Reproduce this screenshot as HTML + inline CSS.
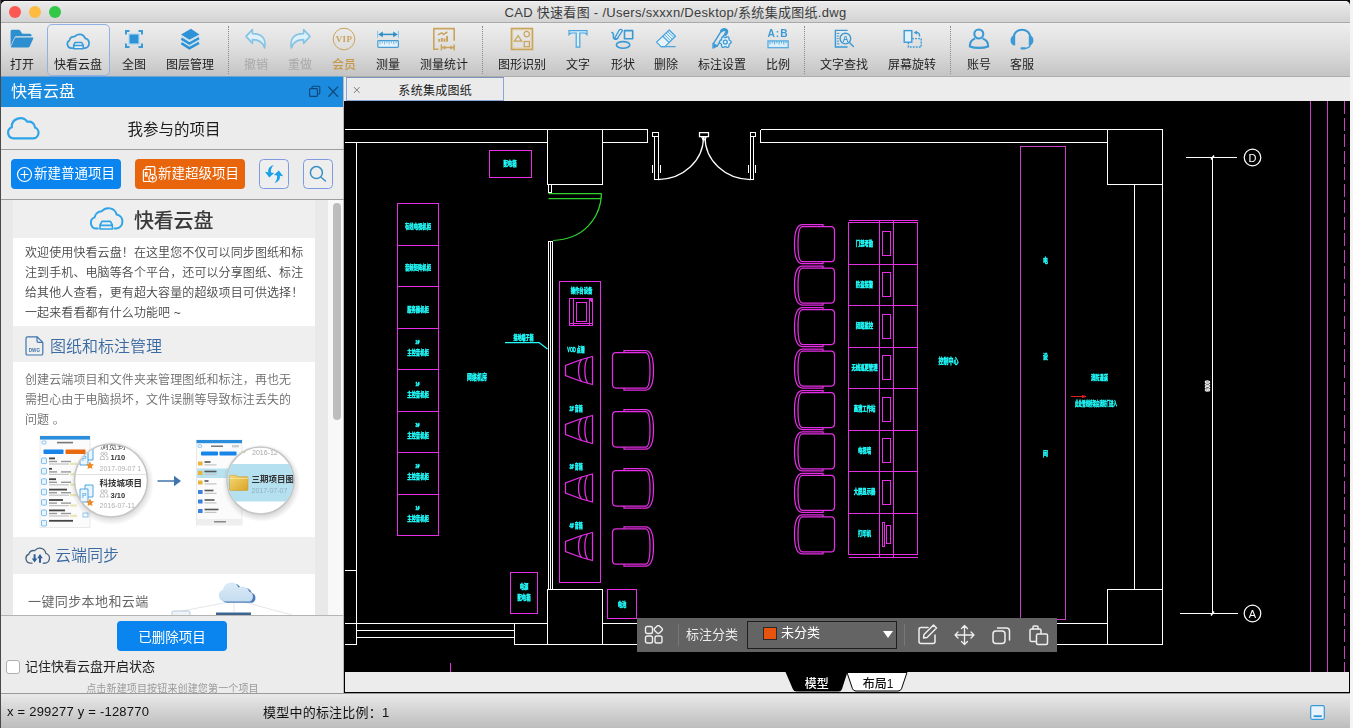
<!DOCTYPE html>
<html lang="zh-CN">
<head>
<meta charset="utf-8">
<title>CAD 快速看图</title>
<style>
*{box-sizing:border-box;margin:0;padding:0}
html,body{width:1353px;height:728px;overflow:hidden}
body{position:relative;background:#ececec;font-family:"Liberation Sans","Noto Sans CJK SC",sans-serif;color:#222;font-size:13px}
.abs{position:absolute}
span,p,svg,#lptitle{will-change:transform}
#edgeL{left:0;top:0;width:1px;height:728px;background:#4a4a4a}
#edgeR{left:1350px;top:0;width:3px;height:728px;background:#f4f4f4}
#topline{left:0;top:0;width:1350px;height:7px;background:#0c0c12}
#titlebar{left:1px;top:1px;width:1349px;height:21px;background:linear-gradient(#ebebeb,#d3d3d3);border-radius:5px 5px 0 0;box-shadow:inset 0 1px 0 #f4f4f4;text-align:center;font-size:13px;line-height:24px;color:#3c3c3c;letter-spacing:.3px}
#titleborder{left:1px;top:22px;width:1349px;height:1px;background:#a9a9a9}
.tl{position:absolute;top:5px;width:12px;height:12px;border-radius:50%}
#toolbar{left:1px;top:23px;width:1349px;height:54px;background:linear-gradient(#eeeeee 0%,#dddddd 50%,#c4c4c4 100%);border-bottom:1px solid #adadad}
.tb{position:absolute;top:0;height:54px;text-align:center;font-size:12px;color:#222;white-space:nowrap}
.tb span{position:absolute;left:-40px;right:-40px;top:34.200px;line-height:16px;text-align:center}
.tb svg{position:absolute;left:50%;top:4px;margin-left:-14px;width:28px;height:28px}
.tb.dis span{color:#a8a8a8}
.tb.vip span{color:#c5994a;font-weight:500}
.sep{position:absolute;top:3px;height:48px;width:0;border-left:1px dotted #8a8a8a}
#cloudbtn{left:45.500px;top:1px;width:63.500px;height:51.500px;border:1px solid #8fb0e8;border-radius:5px;background:rgba(255,255,255,.15)}

#lp{left:1px;top:77px;width:343px;height:616px;background:#ececec;border-right:1px solid #b9b9b9}
#lphead{left:0;top:0;width:342px;height:30px;background:#1b8be0;box-shadow:0 -1px 0 rgba(90,160,225,.75);color:#fff;font-size:16px;line-height:29.500px}
#lphead span{position:absolute;left:10px;top:0}
#lptitle{left:0;top:41.500px;width:346px;text-align:center;font-size:15.500px;line-height:22px;color:#1d1d1d}
.hl{left:0;width:343px;height:1px;background:#9d9d9d}
.btn{height:30px;border-radius:4px;color:#fff;font-size:13.500px;line-height:29px;white-space:nowrap}
.btn svg{position:absolute}
.btn span{position:absolute;top:0}
.ibtn{width:30px;height:30px;border:1px solid #7e9be0;border-radius:4.5px;background:#eeeeee}
.ibtn svg{position:absolute;left:-1px;top:-1px}
#scroll{left:0;top:123px;width:342px;height:415px;overflow:hidden;background:#e9e9e9}
#content{left:12px;top:0;width:302px}
.sec{position:relative;width:302px;overflow:hidden}
.sec.gray{background:#efefef}
.sec.white{background:#fff}
.sec p{position:absolute;left:12px;top:4px;width:290px;font-size:12px;line-height:20px;color:#484848;font-weight:350;white-space:nowrap;letter-spacing:.1px}
.h2{position:absolute;top:8.500px;font-size:16px;line-height:24px;color:#3a6aa2;font-weight:350}
#sbtrack{left:327px;top:0;width:16px;height:415px;background:#f8f8f8}
#sbtrack i{position:absolute;left:5px;top:3px;width:8px;height:217px;border-radius:4px;background:#bdbdbd}
#chk{left:5px;top:583px;width:14px;height:14px;border:1px solid #b0b0b0;border-radius:3px;background:#fff}
#status{left:1px;top:693px;width:1349px;height:35px;background:linear-gradient(#e9e9e9,#bdbdbd);border-top:1px solid #9a9a9a;font-size:13px;color:#111;line-height:16px;white-space:nowrap;letter-spacing:.22px}

#tabbar{left:345px;top:77px;width:1005px;height:24px;background:#ececec}
#tab{left:1px;top:0;width:158px;height:24px;border:1px solid #86a6dc;border-top-color:#7d93b8;background:#ebebeb;font-size:12px;line-height:26px;color:#222;text-align:center;padding-left:20.500px;letter-spacing:.3px}
#canvas{left:344px;top:101px;width:1006px;height:571px;background:#000}
#cad{left:344px;top:101px}
#btabs{left:344px;top:672px;width:1006px;height:21px;background:#ececec;border:1px solid #000;border-top:0}
#ftb{left:637px;top:618px;width:420px;height:34px;background:#626262}
.vd{top:6px;width:1px;height:22px;background:#787878}
#dd{left:110px;top:3px;width:150px;height:28px;border:1px solid #1e1e1e;background:#646464}
</style>
</head>
<body>
<div id="topline" class="abs"></div>
<div id="titlebar" class="abs"><span>CAD 快速看图 - /Users/sxxxn/Desktop/系统集成图纸.dwg</span>
<i class="tl" style="left:8px;background:#fc5753"></i><i class="tl" style="left:28px;background:#fdbc40"></i><i class="tl" style="left:48px;background:#33c748"></i>
</div>
<div id="titleborder" class="abs"></div>
<div id="toolbar" class="abs">
<div id="cloudbtn" class="abs"></div>
<div class="tb " style="left:21px;width:0"><svg viewBox="-16 0 32 28" style="margin-left:-16px;width:32px;height:28px;top:2px"><path fill="#2d8fd0" d="M-11.4,6.2q0-1.5 1.5-1.5h6.6q.9,0 1.4,.8l1.6,2.5q.4,.7 1.3,.7h7q1.5,0 1.5,1.5v1H-5.6q-1.4,0 -2,1.3l-3.8,8.2zM-6.3,12.4h16.9q1.2,0 .7,1.1l-3.6,8q-.5,1.1-1.7,1.1h-16.3q-1.2,0-.7-1.1l3.6-8q.5-1.1 1.1-1.1z"/></svg><span>打开</span></div>
<div class="tb " style="left:77px;width:0"><svg viewBox="-16 0 32 28" style="margin-left:-16px;width:32px;height:28px;top:2px"><g fill="none" stroke="#3a9ad6" stroke-width="1.7" stroke-linecap="round" stroke-linejoin="round"><path d="M-5.6,23.2H-6.8A4.2,4.2 0 0 1 -8.6,15.4A5,5 0 0 1 -3.4,11.6A6.2,6.2 0 0 1 7.2,13.4A5,5 0 0 1 6.8,23.2H6.4"/><path d="M-4.3,23.8V20.2L-2.8,17.4H3.6L5.2,20.2V23.8ZM-4.3,20.5H5.2" stroke-width="1.5" fill="#e4f2fb"/></g></svg><span>快看云盘</span></div>
<div class="tb " style="left:133px;width:0"><svg viewBox="-16 0 32 28" style="margin-left:-16px;width:32px;height:28px;top:2px"><rect x="-5.6" y="8.4" width="11.2" height="11.2" fill="#a9d6f2"/><rect x="-4.4" y="9.6" width="8.8" height="8.8" fill="#2e92d6"/><path fill="none" stroke="#3a9ad6" stroke-width="2" d="M-8,9.5V6h3.5M4.5,6H8V9.500M8,18.5V22H4.5M-4.5,22H-8V18.5"/></svg><span>全图</span></div>
<div class="tb " style="left:189px;width:0"><svg viewBox="-16 0 32 28" style="margin-left:-16px;width:32px;height:28px;top:2px"><path fill="#2e92d6" d="M1,3.8L9.4,9.4L-.6,14.8L-9,9.6Z"/><path fill="none" stroke="#2e92d6" stroke-width="2.6" d="M-8.6,13.6L-.6,18.6L9,13.2M-8.6,18.2L-.6,23.2L9,17.8"/><path fill="none" stroke="#bfe2f7" stroke-width="1" d="M-9,11.2L-.6,16.4L9.4,11M-9,15.9L-.6,21L9.4,15.6"/></svg><span>图层管理</span></div>
<i class="sep" style="left:227px"></i>
<div class="tb dis" style="left:255px;width:0"><svg viewBox="-16 0 32 28" style="margin-left:-16px;width:32px;height:28px;top:2px"><path d="M-10,11.4L-3.6,4.6V8.6C5,8.4 10.6,13 8.6,23C7,17.2 3,14.6-3.6,14.6V18.4Z" fill="#dcf1fb" stroke="#84c3e3" stroke-width="1.600" stroke-linejoin="round"/></svg><span>撤销</span></div>
<div class="tb dis" style="left:299px;width:0"><svg viewBox="-16 0 32 28" style="margin-left:-16px;width:32px;height:28px;top:2px"><path transform="scale(-1,1)" d="M-10,11.4L-3.6,4.6V8.6C5,8.4 10.6,13 8.6,23C7,17.2 3,14.6-3.6,14.6V18.4Z" fill="#dcf1fb" stroke="#84c3e3" stroke-width="1.600" stroke-linejoin="round"/></svg><span>重做</span></div>
<div class="tb vip" style="left:343px;width:0"><svg viewBox="-16 0 32 28" style="margin-left:-16px;width:32px;height:28px;top:2px"><circle cx="0" cy="14" r="10.8" fill="none" stroke="#c8a45c" stroke-width="1"/><text x="0" y="17.2" text-anchor="middle" font-family="Liberation Serif,serif" font-weight="bold" font-size="9" fill="#c8a45c" letter-spacing=".4">VIP</text></svg><span>会员</span></div>
<div class="tb b" style="left:387px;width:0"><svg viewBox="-16 0 32 28" style="margin-left:-16px;width:32px;height:28px;top:2px"><g fill="none"><path stroke="#86c8ec" stroke-width="1.100" d="M-10.400,5.800V12.800M10.400,5.800V12.800"/><path stroke="#2f8fc6" stroke-width="1.500" d="M-7,9.400H7"/><path fill="#2f8fc6" d="M-9.800,9.400L-5.200,6.600V12.200ZM9.800,9.400L5.200,6.600V12.200Z"/><rect x="-10.200" y="15.600" width="20.600" height="6.800" rx=".8" stroke="#4a9bd2" stroke-width="1.200" fill="#e3f2fb"/><path stroke="#6ab4e2" stroke-width=".9" d="M-8.0,15.8v3.6M-5.7,15.8v2.4M-3.4,15.8v3.6M-1.1,15.8v2.4M1.2,15.8v3.6M3.5,15.8v2.4M5.8,15.8v3.6M8.1,15.8v2.4"/></g></svg><span>测量</span></div>
<div class="tb b" style="left:442.6px;width:0"><svg viewBox="-16 0 32 28" style="margin-left:-16px;width:32px;height:28px;top:2px"><g stroke="#c8a45c" fill="none"><path stroke-width="1.600" d="M-5.400,24.200H-10.200V3.600H10.200V15.800"/><path stroke-width="1.500" d="M-1.800,22.600H9.800M-2.600,19.600V25.600M10.200,19.600V25.600"/><path fill="#c8a45c" stroke="none" d="M-2.200,22.600L1.400,20.400V24.800ZM9.800,22.600L6.200,20.400V24.800Z"/><path fill="#c8a45c" stroke="none" d="M-5.700,14h1.900v2.700h-1.900zM-3.100,13h1.900v3.700h-1.900zM-.5,13.500h1.900v3.200h-1.900zM2.100,11h1.900v5.700h-1.900z"/><path stroke-width="1.500" stroke-linejoin="round" d="M-6.100,9.800L-2.400,7.800L-.4,9.400L3.400,7"/></g></svg><span>测量统计</span></div>
<i class="sep" style="left:481px"></i>
<div class="tb " style="left:521px;width:0"><svg viewBox="-16 0 32 28" style="margin-left:-16px;width:32px;height:28px;top:2px"><g stroke="#c8a45c" fill="none"><rect x="-10.4" y="3.6" width="20.8" height="20.8" stroke-width="1.8"/><rect x="-9" y="5" width="18" height="18" stroke="#e6d3a6" stroke-width=".8"/><path stroke-width="1.2" d="M-3.900,10.600L-.2,16.2H-7.600Z"/><circle cx="4.700" cy="9.100" r="2.700" stroke-width="1.2"/><rect x="2.200" y="16.500" width="5.200" height="5.200" stroke-width="1.2"/></g></svg><span>图形识别</span></div>
<div class="tb " style="left:577px;width:0"><svg viewBox="-16 0 32 28" style="margin-left:-16px;width:32px;height:28px;top:2px"><path d="M-9,5.600H9V9.600L7.200,8H1.800V22.200H-1.800V8H-7.200L-9,9.600Z" fill="#dbeefa" stroke="#4aa4de" stroke-width="1.2" stroke-linejoin="miter"/></svg><span>文字</span></div>
<div class="tb " style="left:621.5px;width:0"><svg viewBox="-16 0 32 28" style="margin-left:-16px;width:32px;height:28px;top:2px"><g stroke="#3a9ad6" fill="none" stroke-width="1.600" stroke-linejoin="round" stroke-linecap="round"><rect x="1.500" y="5.600" width="8.200" height="8.200"/><ellipse cx=".1" cy="19.900" rx="6.700" ry="3.300"/><path stroke-width="1.300" fill="#dbeefa" d="M-3.600,4.800Q-1.800,3.800 -.6,5.600L-5.400,13.200Q-6.600,14.600 -8.400,13.400Z"/><path stroke-width="1.500" d="M-5.400,13.400C-8,15.400-10.200,13.600-9.600,10.400C-9.400,9 -10,7.800 -11.200,7.400"/></g></svg><span>形状</span></div>
<div class="tb " style="left:665px;width:0"><svg viewBox="-16 0 32 28" style="margin-left:-16px;width:32px;height:28px;top:2px"><g stroke="#4aa4de" fill="none" stroke-width="1.300" stroke-linejoin="round"><path d="M3.200,5L9.400,11.200L-1,21.600H-5L-9.500,17.100Z" fill="#e6f3fb"/><path d="M-5,21.600H9.600M-3.200,11.200L3,17.400"/><path stroke-width=".9" d="M-1.600,9.600L4.600,15.800M0,8L6.200,14.200M1.600,6.400L7.800,12.600"/></g></svg><span>删除</span></div>
<div class="tb " style="left:721px;width:0"><svg viewBox="-16 0 32 28" style="margin-left:-16px;width:32px;height:28px;top:2px"><g stroke="#3a9ad6" fill="none" stroke-linejoin="round" stroke-linecap="round"><path stroke-width="1.400" d="M-8.600,18.600L-.8,6.200M-4.600,20.600L1.800,10.400"/><path stroke-width="3" d="M-.4,5.800C1.600,3.600 5.400,4.600 4.600,7.600L3.400,9.600"/><path fill="#3a9ad6" stroke-width="1" d="M-8.800,18.400L-4.200,21L-8.800,23.200Z"/><path d="M9.25,17.10L9.13,17.61L8.79,18.07L8.32,18.45L7.83,18.75L7.42,19.02L7.15,19.33L7.03,19.71L7.00,20.20L6.98,20.78L6.88,21.37L6.66,21.89L6.28,22.25L5.77,22.40L5.21,22.34L4.65,22.12L4.14,21.85L3.70,21.63L3.30,21.55L2.90,21.63L2.46,21.85L1.95,22.12L1.39,22.34L0.83,22.40L0.33,22.25L-0.06,21.89L-0.28,21.37L-0.38,20.78L-0.40,20.20L-0.43,19.71L-0.55,19.33L-0.82,19.02L-1.23,18.75L-1.72,18.45L-2.19,18.07L-2.53,17.61L-2.65,17.10L-2.53,16.59L-2.19,16.13L-1.72,15.75L-1.23,15.45L-0.82,15.18L-0.55,14.88L-0.43,14.49L-0.40,14.00L-0.38,13.42L-0.28,12.83L-0.06,12.31L0.32,11.95L0.83,11.80L1.39,11.86L1.95,12.08L2.46,12.35L2.90,12.57L3.30,12.65L3.70,12.57L4.14,12.35L4.65,12.08L5.21,11.86L5.77,11.80L6.27,11.95L6.66,12.31L6.88,12.83L6.98,13.42L7.00,14.00L7.03,14.49L7.15,14.88L7.42,15.18L7.83,15.45L8.32,15.75L8.79,16.13L9.13,16.59Z" fill="#e2f0f9" stroke-width="1.300"/><circle cx="3.300" cy="17.100" r="2" stroke-width="1.300"/></g></svg><span>标注设置</span></div>
<div class="tb " style="left:777px;width:0"><svg viewBox="-16 0 32 28" style="margin-left:-16px;width:32px;height:28px;top:2px"><text x="0" y="12.400" text-anchor="middle" font-family="Liberation Sans,sans-serif" font-weight="bold" font-size="10.200" fill="#3a9ad6" letter-spacing="1">A:B</text><rect x="-10" y="15.900" width="20.200" height="6.800" stroke="#55ace0" stroke-width="1.300" fill="#dbeefa"/><path stroke="#55ace0" stroke-width="1" d="M-8.0,16v3.4M-5.7,16v2.2M-3.4,16v3.4M-1.1,16v2.2M1.2,16v3.4M3.5,16v2.2M5.8,16v3.4M8.1,16v2.2"/></svg><span>比例</span></div>
<i class="sep" style="left:803px"></i>
<div class="tb " style="left:843px;width:0"><svg viewBox="-16 0 32 28" style="margin-left:-16px;width:32px;height:28px;top:2px"><g stroke="#3a9ad6" fill="none" stroke-width="1.400"><path d="M3.600,5.400H-8.600V22H3.600"/><path stroke-width="1" d="M-7.200,8.400h2.600M-7.200,11h2.200M-7.200,13.600h1.800M-7.200,16.200h2.200M-7.200,18.800h2.600"/><circle cx="1.400" cy="13.600" r="5.300" fill="#e6e6e6"/><path stroke-linecap="round" d="M5.400,17.600L9.400,21.600"/></g><text x="1.400" y="16.600" text-anchor="middle" font-family="Liberation Sans,sans-serif" font-weight="bold" font-size="8.400" fill="#3a9ad6">A</text></svg><span>文字查找</span></div>
<div class="tb " style="left:911px;width:0"><svg viewBox="-16 0 32 28" style="margin-left:-16px;width:32px;height:28px;top:2px"><g stroke="#3a9ad6" fill="none" stroke-width="1.400"><rect x="-7.800" y="5.600" width="7.600" height="11.600" fill="#e4f1fa"/><path stroke-dasharray="1.800 1.200" d="M-3.600,17.400V22H9.200V13.600H0"/><path stroke-width="1.300" d="M3.600,7.400C6.400,7 7.800,8.800 7.600,11.600"/><path fill="#3a9ad6" stroke="none" d="M1.600,7.800L4.800,5.400L5,9.400Z"/></g></svg><span>屏幕旋转</span></div>
<i class="sep" style="left:949px"></i>
<div class="tb " style="left:977.5px;width:0"><svg viewBox="-16 0 32 28" style="margin-left:-16px;width:32px;height:28px;top:2px"><g stroke="#3a9ad6" fill="none" stroke-width="2.100" stroke-linejoin="round"><circle cx="-.2" cy="9" r="4.500"/><path d="M-4,13.600C-7.600,15-9.200,18.200-9.200,21.400C-4,23.400 4,23.400 9.200,21.400C9.200,18.200 7.600,15 3.600,13.600"/></g></svg><span>账号</span></div>
<div class="tb " style="left:1021px;width:0"><svg viewBox="-16 0 32 28" style="margin-left:-16px;width:32px;height:28px;top:2px"><g stroke="#3a9ad6" fill="none"><path stroke-width="2" d="M-8.400,13.200C-8.400,1.800 8.400,1.800 8.400,13.200"/><path fill="#3a9ad6" stroke="none" d="M-6.800,10C-13,10-13,20.600-6.800,20.600ZM6.800,10C13,10 13,20.600 6.800,20.600Z"/><path stroke-width="1.300" d="M8.200,19.600C8.200,22.400 5.400,23.400 2.400,23.400"/><path stroke-width="2.200" stroke-linecap="round" d="M-.4,23.400H2.600"/></g></svg><span>客服</span></div>

</div>
<div id="lp" class="abs">
 <div id="lphead" class="abs"><span>快看云盘</span>
  <svg class="abs" style="left:305px;top:7px" width="34" height="16" viewBox="0 0 34 16"><g fill="none" stroke="#124678" stroke-width="1.100"><rect x="3.6" y="4.600" width="7.800" height="7.800" rx="1"/><path d="M6,4.400V3.200q0-1 1-1h5.800q1,0 1,1V9q0,1-1,1H11.600"/></g><path stroke="#0f4a76" stroke-width="1.300" d="M22.400,2.600L32,12.800M32,2.600L22.400,12.800"/></svg>
 </div>
 <svg class="abs" style="left:4px;top:36px" width="36" height="30" viewBox="0 0 36 30"><path fill="none" stroke="#2fa4e7" stroke-width="2.200" stroke-linejoin="round" d="M8.600,25.400A5.800,5.800 0 0 1 6.800,14.200A8.600,8.600 0 0 1 22.400,8.800A6,6 0 0 1 30,14.600A5.600,5.600 0 0 1 27.600,25.400Z"/></svg>
 <div id="lptitle" class="abs">我参与的项目</div>
 <div class="abs hl" style="top:72px"></div>
 <div class="abs btn" style="left:10px;top:82px;width:110px;background:#0a84ee">
  <svg width="17" height="17" viewBox="0 0 17 17" style="left:5px;top:6.500px"><g fill="none" stroke="#fff" stroke-width="1.200"><circle cx="8.500" cy="8.500" r="7"/><path d="M8.500,4.500v8M4.500,8.500h8"/></g></svg><span style="left:23px">新建普通项目</span></div>
 <div class="abs btn" style="left:134px;top:82px;width:110px;background:#e9650b">
  <svg width="17" height="19" viewBox="0 0 17 19" style="left:6px;top:5.500px"><g fill="none" stroke="#fff" stroke-width="1.200"><path d="M5,4.500V2.600q0-1 1-1h6.800q1,0 1,1V9"/><path d="M10,16.500H3.400q-1,0-1-1V5.500q0-1 1-1H9.400V9.500"/><path d="M4.400,7.500h1.600v3.600h-1.600z"/><circle cx="11.600" cy="13.200" r="3.800" fill="#e9650b"/><path d="M11.600,11v4.400M9.400,13.200h4.400"/></g></svg><span style="left:23px">新建超级项目</span></div>
 <div class="abs ibtn" style="left:258px;top:82px"><svg width="30" height="30" viewBox="0 0 30 30"><g fill="#1aa3ea" transform="translate(15.050 15) scale(1.120) translate(-15.050 -15)"><path d="M14.700,7C10.800,8.200 9.300,10.800 9.900,13.500L6.900,13.100L10.800,18.100L15.100,14L12.400,13.700C12,11.200 12.800,9 14.700,7Z"/><path d="M14.700,7C10.800,8.200 9.300,10.800 9.900,13.500L6.900,13.100L10.800,18.100L15.100,14L12.400,13.700C12,11.200 12.800,9 14.700,7Z" transform="rotate(180 15.050 15)"/></g></svg></div>
 <div class="abs ibtn" style="left:302px;top:82px"><svg width="30" height="30" viewBox="0 0 30 30"><g fill="none" stroke="#3a92c4" stroke-width="1.500" stroke-linecap="round"><circle cx="13.400" cy="13.600" r="6"/><path d="M17.800,18L22.400,22"/></g></svg></div>
 <div class="abs hl" style="top:122px"></div>
 <div id="scroll" class="abs">
  <div id="content" class="abs">
   <div class="sec gray" style="height:38px">
     <svg class="abs" style="left:74.500px;top:2.500px" width="36" height="28" viewBox="0 0 36 28"><g fill="none" stroke="#2fa4e7" stroke-width="2" stroke-linejoin="round" stroke-linecap="round"><path d="M9.800,25.600H8.600A5.800,5.800 0 0 1 6.600,14.400A7.600,7.600 0 0 1 13.800,8.200A8.600,8.600 0 0 1 28.600,11.400A7.200,7.200 0 0 1 28.200,25.600H26.400"/><path stroke-width="1.600" d="M12,26V22L14,18.400H22.400L24.400,22V26ZM12,22.400H24.400"/></g></svg>
     <span class="abs" style="left:121px;top:6.500px;font-size:20px;line-height:28px;font-weight:500;color:#3a3a3a;letter-spacing:-.2px">快看云盘</span>
   </div>
   <div class="sec white" style="height:88px"><p style="top:4.700px">欢迎使用快看云盘！在这里您不仅可以同步图纸和标<br>注到手机、电脑等各个平台，还可以分享图纸、标注<br>给其他人查看，更有超大容量的超级项目可供选择！<br>一起来看看都有什么功能吧 ~</p></div>
   <div class="sec gray" style="height:36px">
     <svg class="abs" style="left:12px;top:10px" width="19" height="20" viewBox="0 0 19 20"><g fill="none" stroke="#3e76ad" stroke-width="1.200" stroke-linejoin="round"><path d="M2.600,.8H12L17.800,6.400V17.400q0,1.600-1.600,1.600H2.600q-1.600,0-1.600-1.600V2.400Q1,.8 2.600,.8Z"/><path d="M12,.8V5q0,1.400 1.400,1.400H17.800"/></g><text x="9.400" y="16.200" text-anchor="middle" font-family="Liberation Sans,sans-serif" font-size="4.600" font-weight="bold" fill="#3e76ad">DWG</text></svg>
     <span class="h2" style="left:37px">图纸和标注管理</span>
   </div>
   <div class="sec white" style="height:175px"><p style="top:8px;color:#6c6c6c">创建云端项目和文件夹来管理图纸和标注，再也无<br>需担心由于电脑损坏，文件误删等导致标注丢失的<br>问题 。</p>
   <svg class="abs" style="left:0;top:0" width="302" height="175" viewBox="13 362 302 175" font-family="'Liberation Sans','Noto Sans CJK SC',sans-serif">
<defs><clipPath id="c1"><circle cx="111" cy="480.500" r="36"/></clipPath><clipPath id="c2"><circle cx="260.500" cy="480.500" r="33"/></clipPath><radialGradient id="sh"><stop offset="0.800" stop-color="#000" stop-opacity=".16"/><stop offset="1" stop-color="#000" stop-opacity="0"/></radialGradient><linearGradient id="fg" x1="0" y1="0" x2="1" y2="1"><stop offset="0" stop-color="#f6d873"/><stop offset="1" stop-color="#d9a428"/></linearGradient></defs>
<rect x="40" y="436" width="50" height="91.500" fill="#fbfbfb" stroke="#dcdcdc" stroke-width=".6"/>
<rect x="40" y="436" width="50" height="3.600" fill="#2a8edc"/>
<rect x="42" y="441" width="4" height="3" rx="1" fill="none" stroke="#4aa6e6" stroke-width=".6"/><rect x="57" y="441.800" width="16" height="1.600" fill="#777"/>
<rect x="43.500" y="449.500" width="20" height="4.600" rx=".8" fill="#1784ea"/><rect x="65.500" y="449.500" width="20" height="4.600" rx=".8" fill="#ea6a10"/>
<rect x="41.500" y="458.0" width="5" height="5.600" rx=".8" fill="#e8f4fc" stroke="#4aa6e6" stroke-width=".7"/>
<rect x="49" y="457.5" width="6" height="1.800" fill="#444"/>
<rect x="49" y="460.8" width="8" height="1.400" fill="#999"/><rect x="61" y="460.8" width="10" height="1.400" fill="#999"/><rect x="49" y="463.4" width="20" height="1.200" fill="#c4c4c4"/><rect x="70" y="462.8" width="7" height="2.200" fill="#e9e6b8"/>
<rect x="41.500" y="468.4" width="5" height="5.600" rx=".8" fill="#e8f4fc" stroke="#4aa6e6" stroke-width=".7"/>
<rect x="49" y="467.9" width="3" height="1.800" fill="#444"/>
<rect x="49" y="471.2" width="8" height="1.400" fill="#999"/><rect x="61" y="471.2" width="10" height="1.400" fill="#999"/><rect x="49" y="473.8" width="20" height="1.200" fill="#c4c4c4"/><rect x="70" y="473.2" width="7" height="2.200" fill="#e9e6b8"/>
<rect x="41.500" y="478.8" width="5" height="5.600" rx=".8" fill="#e8f4fc" stroke="#4aa6e6" stroke-width=".7"/>
<rect x="49" y="478.3" width="7" height="1.800" fill="#444"/>
<rect x="49" y="481.6" width="8" height="1.400" fill="#999"/><rect x="61" y="481.6" width="10" height="1.400" fill="#999"/><rect x="49" y="484.2" width="20" height="1.200" fill="#c4c4c4"/><rect x="70" y="483.6" width="7" height="2.200" fill="#e9e6b8"/>
<rect x="41.500" y="489.2" width="5" height="5.600" rx=".8" fill="#e8f4fc" stroke="#4aa6e6" stroke-width=".7"/>
<rect x="49" y="488.7" width="18" height="1.800" fill="#444"/>
<rect x="49" y="492.0" width="8" height="1.400" fill="#999"/><rect x="61" y="492.0" width="10" height="1.400" fill="#999"/><rect x="49" y="494.6" width="20" height="1.200" fill="#c4c4c4"/><rect x="70" y="494.0" width="7" height="2.200" fill="#e9e6b8"/>
<rect x="41.500" y="499.6" width="5" height="5.600" rx=".8" fill="#e8f4fc" stroke="#4aa6e6" stroke-width=".7"/>
<rect x="49" y="499.1" width="14" height="1.800" fill="#444"/>
<rect x="49" y="502.4" width="8" height="1.400" fill="#999"/><rect x="61" y="502.4" width="10" height="1.400" fill="#999"/><rect x="49" y="505.0" width="20" height="1.200" fill="#c4c4c4"/><rect x="70" y="504.4" width="7" height="2.200" fill="#e9e6b8"/>
<rect x="41.500" y="510.0" width="5" height="5.600" rx=".8" fill="#e8f4fc" stroke="#4aa6e6" stroke-width=".7"/>
<rect x="49" y="509.5" width="16" height="1.800" fill="#444"/>
<rect x="49" y="512.8" width="8" height="1.400" fill="#999"/><rect x="61" y="512.8" width="10" height="1.400" fill="#999"/><rect x="49" y="515.4" width="20" height="1.200" fill="#c4c4c4"/><rect x="70" y="514.8" width="7" height="2.200" fill="#e9e6b8"/>
<rect x="41.500" y="520.4" width="5" height="5.600" rx=".8" fill="#e8f4fc" stroke="#4aa6e6" stroke-width=".7"/>
<rect x="49" y="519.9" width="24" height="1.800" fill="#444"/>
<rect x="83" y="513" width="5" height="4" fill="none" stroke="#4aa6e6" stroke-width=".6"/>
<circle cx="112" cy="483" r="42" fill="url(#sh)"/>
<circle cx="111" cy="480.500" r="36.500" fill="#fff" stroke="#c6c6c6" stroke-width="1.600"/>
<g clip-path="url(#c1)">
<path d="M74,474.500H148" stroke="#d9d9d9" stroke-width=".8"/>
<g fill="#eaf5fd" stroke="#3f9fe0" stroke-width=".9"><path d="M85,448h8v12h-8z"/><path d="M80,452h8v13h-8z"/></g><text x="82" y="461" font-size="7" fill="#3f9fe0">P</text><path fill="#f08a24" d="M90,461.5l1.200,2.600 2.800,.3-2.100,1.900 .6,2.800-2.500-1.400-2.500,1.400 .6-2.800-2.100-1.900 2.800-.3z"/>
<g fill="#eaf5fd" stroke="#3f9fe0" stroke-width=".9"><path d="M85,485h8v12h-8z"/><path d="M80,489h8v13h-8z"/></g><text x="82" y="498" font-size="7" fill="#3f9fe0">P</text><path fill="#f08a24" d="M90,498.5l1.200,2.600 2.800,.3-2.100,1.900 .6,2.800-2.500-1.400-2.500,1.400 .6-2.800-2.100-1.900 2.800-.3z"/>
<text x="100" y="449" font-size="8.500" fill="#444">浏览到</text>
<g fill="none" stroke="#aaa" stroke-width=".7"><circle cx="102.300" cy="453.800" r="1.500"/><path d="M100,459.500q0-3.500 2.300-3.500t2.300,3.500z"/><circle cx="105.800" cy="453.800" r="1.500"/><path d="M105.800,456q2.300,0 2.300,3.500h-2"/></g>
<text x="110.500" y="460" font-size="7.500" font-weight="bold" fill="#333">1/10</text>
<text x="99.500" y="470.500" font-size="7" fill="#b0b0b0">2017-09-07 1</text>
<text x="99.500" y="485.500" font-size="8.500" font-weight="bold" fill="#333">科技城项目</text>
<g fill="none" stroke="#aaa" stroke-width=".7"><circle cx="102.300" cy="491.300" r="1.500"/><path d="M100,497q0-3.500 2.300-3.500t2.300,3.500z"/><circle cx="105.800" cy="491.300" r="1.500"/><path d="M105.800,493.500q2.300,0 2.300,3.500h-2"/></g>
<text x="110.500" y="497.500" font-size="7.500" font-weight="bold" fill="#333">3/10</text>
<text x="99.500" y="508" font-size="7" fill="#b0b0b0">2016-07-11</text>
</g>
<path d="M157.500,481H176" stroke="#3e76ad" stroke-width="1.500"/><path d="M174,475.800L181,481L174,486.200Z" fill="#3e76ad"/>
<rect x="196.500" y="440" width="45.500" height="85" fill="#fbfbfb" stroke="#dcdcdc" stroke-width=".6"/>
<rect x="196.500" y="440" width="45.500" height="3.200" fill="#2a8edc"/>
<rect x="198" y="444.800" width="3.500" height="2.600" rx=".8" fill="none" stroke="#4aa6e6" stroke-width=".6"/><rect x="211" y="445.500" width="12" height="1.500" fill="#777"/><rect x="232" y="445" width="7" height="2.400" fill="#ccc"/>
<rect x="201" y="451.500" width="17" height="4" rx=".8" fill="#1784ea"/><rect x="219.500" y="451.500" width="17" height="4" rx=".8" fill="#1784ea"/>
<rect x="197" y="468.500" width="44.500" height="9.500" fill="#b9e2f1"/>
<rect x="198" y="461.5" width="4.600" height="4" rx=".6" fill="#e7b53a"/><rect x="204.500" y="461.2" width="6" height="1.600" fill="#555"/><rect x="204.500" y="464.3" width="12" height="1.200" fill="#c4c4c4"/>
<rect x="198" y="471.0" width="4.600" height="4" rx=".6" fill="#e7b53a"/><rect x="204.500" y="470.7" width="12" height="1.600" fill="#555"/><rect x="204.500" y="473.8" width="12" height="1.200" fill="#c4c4c4"/>
<rect x="198" y="480.5" width="4.600" height="4" rx=".6" fill="#e7b53a"/><rect x="204.500" y="480.2" width="4" height="1.600" fill="#555"/><rect x="204.500" y="483.3" width="12" height="1.200" fill="#c4c4c4"/>
<rect x="198" y="490.0" width="4.600" height="4" rx=".6" fill="#3b7fe0"/><rect x="204.500" y="489.7" width="9" height="1.600" fill="#555"/><rect x="204.500" y="492.8" width="12" height="1.200" fill="#c4c4c4"/>
<rect x="198" y="499.5" width="4.600" height="4" rx=".6" fill="#3b7fe0"/><rect x="204.500" y="499.2" width="10" height="1.600" fill="#555"/><rect x="204.500" y="502.3" width="12" height="1.200" fill="#c4c4c4"/>
<rect x="198" y="509.0" width="4.600" height="4" rx=".6" fill="#3b7fe0"/><rect x="204.500" y="508.7" width="14" height="1.600" fill="#555"/><rect x="204.500" y="511.8" width="12" height="1.200" fill="#c4c4c4"/>
<rect x="197" y="519" width="44.500" height="5.500" fill="#eee"/><rect x="214" y="521" width="12" height="1.500" fill="#888"/>
<circle cx="261.500" cy="483" r="39" fill="url(#sh)"/>
<circle cx="260.500" cy="480.500" r="33.500" fill="#fff" stroke="#c6c6c6" stroke-width="1.600"/>
<g clip-path="url(#c2)">
<rect x="225" y="464" width="72" height="37.500" fill="#b5e0f0"/>
<text x="252" y="455" font-size="7" fill="#a8a8a8">2016-12</text><path d="M241,452l4-2v3z" fill="#e0b040"/>
<path d="M229.500,476.500q0-1.200 1.200-1.200h5.500l1.200,1.400h9.400q1.200,0 1.200,1.200v11.400q0,1.200-1.200,1.200h-16.100q-1.200,0-1.200-1.200z" fill="url(#fg)" stroke="#c9972a" stroke-width=".5"/><path d="M229.500,478.500h18.500" stroke="#fbe9a8" stroke-width=".7"/>
<text x="251.500" y="481.500" font-size="8.500" font-weight="bold" fill="#333">三期项目图纸</text>
<text x="251.500" y="492.500" font-size="7" fill="#8fb0bd">2017-07-07</text>
</g>
</svg>
   </div>
   <div class="sec gray" style="height:37px">
     <svg class="abs" style="left:12px;top:9px" width="25" height="19" viewBox="0 0 25 19"><path fill="none" stroke="#45627f" stroke-width="1.300" stroke-linecap="round" stroke-linejoin="round" d="M7,17.200H5.600A4.700,4.700 0 0 1 3.800,8.200A5.400,5.400 0 0 1 9.800,4.600A6.200,6.200 0 0 1 20.800,7.400A5,5 0 0 1 19,17.200H18.200"/><path stroke="#2f5f96" stroke-width="2" d="M9.600,8.200V14M15,16.800V11"/><path fill="#2f5f96" d="M6.800,12.400L9.600,16.600L12.400,12.400ZM12.200,12.200L15,8L17.800,12.200Z"/></svg>
     <span class="h2" style="left:42px;top:7px">云端同步</span>
   </div>
   <div class="sec white" style="height:60px"><span class="abs" style="left:15px;top:18px;font-size:13px;color:#666;letter-spacing:.4px;line-height:20px">一键同步本地和云端</span>
   <svg class="abs" style="left:0;top:0" width="302" height="60" viewBox="13 574 302 60">
<defs><linearGradient id="cg" x1="0" y1="0" x2="0" y2="1"><stop offset="0" stop-color="#dcebf8"/><stop offset="1" stop-color="#c4dcf0"/></linearGradient></defs>
<g stroke="#d5dbe2" stroke-width=".7" fill="none"><path d="M234,601L182,611M234,601V612M240,601L292,615"/></g>
<path d="M224.500,601.500a6,6 0 0 1-1.500-11.700a8,8 0 0 1 15.400-2.200a7.600,7.600 0 0 1 11,4.200a5.200,5.200 0 0 1 .4,9.700z" transform="translate(2.500,1.200)" fill="#4a7db8"/>
<path d="M224.500,601.500a6,6 0 0 1-1.500-11.700a8,8 0 0 1 15.400-2.200a7.600,7.600 0 0 1 11,4.200a5.200,5.200 0 0 1 .4,9.700z" fill="url(#cg)"/>
<rect x="172" y="611" width="18" height="6" rx="1.500" fill="#eef3f8" stroke="#a9bfd6" stroke-width=".8"/><rect x="216" y="612.500" width="35" height="4" fill="#3d648f"/>
</svg>
   </div>
  </div>
  <div id="sbtrack" class="abs"><i></i></div>
 </div>
 <div class="abs hl" style="top:538px;background:#b5b5b5"></div>
 <div class="abs btn" style="left:116px;top:544px;width:110px;background:#0a84ee;text-align:center"><span style="left:0;right:0;top:1.500px;font-size:13.500px">已删除项目</span></div>
 <i class="abs" id="chk"></i><span class="abs" style="left:24px;top:581px;font-size:13px;line-height:18px;color:#222">记住快看云盘开启状态</span>
 <span class="abs" style="left:0;width:343px;top:605px;text-align:center;font-size:10px;line-height:14px;color:#9a9a9a;letter-spacing:.15px">点击新建项目按钮来创建您第一个项目</span>
</div>

<div id="tabbar" class="abs"><div id="tab" class="abs"><span class="abs" style="left:5.400px;top:-.5px;font-size:9.500px;line-height:23px;font-weight:300;color:#333;font-family:'Noto Sans CJK SC',sans-serif">×</span><span>系统集成图纸</span></div></div>
<div id="canvas" class="abs"></div>
<svg id="cad" class="abs" width="1006" height="571" viewBox="344 101 1006 571" fill="none" font-family="'Liberation Sans','Noto Sans CJK SC',sans-serif" shape-rendering="crispEdges"><path d="M345,129.5H647.5V142.5H602.5M547.5,142.5H345" stroke="#fff" stroke-width="1" />
<rect x="547.5" y="129.5" width="55.0" height="55.0" stroke="#fff" stroke-width="1"/>
<path d="M356.5,142.5V570.5H345M356.5,570.5V644.5" stroke="#fff" stroke-width="1" />
<path d="M345,623.5H547.5M356.5,630.5H514.5M356.5,637.5H514.5M345,644.5H356.5M514.500,623.5V644.5H1107.5M602.5,623.5H1107.5" stroke="#fff" stroke-width="1" />
<rect x="547.5" y="589.5" width="55.0" height="55.0" stroke="#fff" stroke-width="1"/>
<path d="M548.5,184.5V193M551.5,184.5V193M548,192.500H552" stroke="#fff" stroke-width="1" />
<path d="M548.5,241V589.5M550.5,241V589.5M552.5,241V589.5M548,241.5H553" stroke="#fff" stroke-width="1" />
<path d="M548.5,193.5H601.5M548.5,198.5H600.5M601.5,193.5C600.5,219 583,239.500 553,240.500" stroke="#2fd12f" stroke-width="1.25"  shape-rendering="geometricPrecision"/>
<rect x="652.5" y="132.5" width="5.5" height="4.0" stroke="#fff" stroke-width="1"/>
<rect x="654.5" y="136.5" width="3.5" height="43.0" stroke="#fff" stroke-width="1"/>
<path d="M652.5,164.5V173M660.0,164.5V173" stroke="#fff" stroke-width="1" />
<rect x="750.0" y="132.5" width="5.5" height="4.0" stroke="#fff" stroke-width="1"/>
<rect x="750.0" y="136.5" width="3.5" height="43.0" stroke="#fff" stroke-width="1"/>
<path d="M755.5,164.5V173M748.0,164.5V173" stroke="#fff" stroke-width="1" />
<path d="M658,179.5A45.5,42.500 0 0 0 703.500,137M750.500,179.5A45.5,42.500 0 0 1 705,137" stroke="#fff" stroke-width="1.25"  shape-rendering="geometricPrecision"/>
<path d="M699.5,132.5H708.5V136.5H699.5ZM701.5,136.5L703,139.500H705L706.500,136.5" stroke="#fff" stroke-width="1.25"  shape-rendering="geometricPrecision"/>
<path d="M760.5,129.5H1162.5M760.5,129.5V142.5H1107.5" stroke="#fff" stroke-width="1" />
<rect x="1107.5" y="129.5" width="55.0" height="55.0" stroke="#fff" stroke-width="1"/>
<path d="M1134.5,184.5V589.5M1162.5,184.5V589.5" stroke="#fff" stroke-width="1" />
<rect x="1107.5" y="589.5" width="55.0" height="55.0" stroke="#fff" stroke-width="1"/>
<path d="M1186,157.5H1237M1180,613.5H1238M1212.5,157.5V613.5" stroke="#fff" stroke-width="1" />
<path d="M1211,159.500L1214,155.500M1211,615.500L1214,611.500" stroke="#fff" stroke-width="1.5"  shape-rendering="geometricPrecision"/>
<circle cx="1252.5" cy="157.5" r="8.300" stroke="#fff" stroke-width="1.200" shape-rendering="geometricPrecision"/>
<text x="1252.5" y="161.7" text-anchor="middle" font-size="11" font-family="Liberation Sans,sans-serif" fill="#fff" stroke="none">D</text>
<circle cx="1252.5" cy="613.5" r="8.300" stroke="#fff" stroke-width="1.200" shape-rendering="geometricPrecision"/>
<text x="1252.5" y="617.7" text-anchor="middle" font-size="11" font-family="Liberation Sans,sans-serif" fill="#fff" stroke="none">A</text>
<text transform="translate(1209.5,386) rotate(-90) scale(0.7,1)" text-anchor="middle" font-size="7" font-weight="bold" fill="#fff" stroke="#fff" stroke-width=".45" stroke-linejoin="round">6000</text>
<rect x="489.5" y="150.5" width="42.0" height="27.0" stroke="#e62ee6" stroke-width="1"/>
<text transform="translate(510,166) scale(0.62,1)" text-anchor="middle" font-size="7" font-weight="bold" fill="#22ffff" stroke="#22ffff" stroke-width=".45" stroke-linejoin="round">配电箱</text>
<rect x="397.5" y="203.5" width="41.0" height="332.0" stroke="#e62ee6" stroke-width="1"/>
<path d="M397.5,245L438.5,245" stroke="#e62ee6" stroke-width="1"/>
<path d="M397.5,286.5L438.5,286.5" stroke="#e62ee6" stroke-width="1"/>
<path d="M397.5,328.5L438.5,328.5" stroke="#e62ee6" stroke-width="1"/>
<path d="M397.5,369.5L438.5,369.5" stroke="#e62ee6" stroke-width="1"/>
<path d="M397.5,411.5L438.5,411.5" stroke="#e62ee6" stroke-width="1"/>
<path d="M397.5,452.5L438.5,452.5" stroke="#e62ee6" stroke-width="1"/>
<path d="M397.5,494L438.5,494" stroke="#e62ee6" stroke-width="1"/>
<text transform="translate(418,228.75) scale(0.62,1)" text-anchor="middle" font-size="7" font-weight="bold" fill="#22ffff" stroke="#22ffff" stroke-width=".45" stroke-linejoin="round">有线电视机柜</text>
<text transform="translate(418,270.25) scale(0.62,1)" text-anchor="middle" font-size="7" font-weight="bold" fill="#22ffff" stroke="#22ffff" stroke-width=".45" stroke-linejoin="round">音频矩阵机柜</text>
<text transform="translate(418,312.0) scale(0.62,1)" text-anchor="middle" font-size="7" font-weight="bold" fill="#22ffff" stroke="#22ffff" stroke-width=".45" stroke-linejoin="round">服务器机柜</text>
<text transform="translate(417.5,344.0) scale(0.7,1)" text-anchor="middle" font-size="5" font-weight="bold" fill="#22ffff" stroke="#22ffff" stroke-width=".45" stroke-linejoin="round">2#</text>
<text transform="translate(418,355.0) scale(0.62,1)" text-anchor="middle" font-size="7" font-weight="bold" fill="#22ffff" stroke="#22ffff" stroke-width=".45" stroke-linejoin="round">主控音机柜</text>
<text transform="translate(417.5,385.5) scale(0.7,1)" text-anchor="middle" font-size="5" font-weight="bold" fill="#22ffff" stroke="#22ffff" stroke-width=".45" stroke-linejoin="round">1#</text>
<text transform="translate(418,396.5) scale(0.62,1)" text-anchor="middle" font-size="7" font-weight="bold" fill="#22ffff" stroke="#22ffff" stroke-width=".45" stroke-linejoin="round">主控音机柜</text>
<text transform="translate(417.5,427.0) scale(0.7,1)" text-anchor="middle" font-size="5" font-weight="bold" fill="#22ffff" stroke="#22ffff" stroke-width=".45" stroke-linejoin="round">3#</text>
<text transform="translate(418,438.0) scale(0.62,1)" text-anchor="middle" font-size="7" font-weight="bold" fill="#22ffff" stroke="#22ffff" stroke-width=".45" stroke-linejoin="round">主控音机柜</text>
<text transform="translate(417.5,468.25) scale(0.7,1)" text-anchor="middle" font-size="5" font-weight="bold" fill="#22ffff" stroke="#22ffff" stroke-width=".45" stroke-linejoin="round">2#</text>
<text transform="translate(418,479.25) scale(0.62,1)" text-anchor="middle" font-size="7" font-weight="bold" fill="#22ffff" stroke="#22ffff" stroke-width=".45" stroke-linejoin="round">主控音机柜</text>
<text transform="translate(417.5,509.75) scale(0.7,1)" text-anchor="middle" font-size="5" font-weight="bold" fill="#22ffff" stroke="#22ffff" stroke-width=".45" stroke-linejoin="round">1#</text>
<text transform="translate(418,520.75) scale(0.62,1)" text-anchor="middle" font-size="7" font-weight="bold" fill="#22ffff" stroke="#22ffff" stroke-width=".45" stroke-linejoin="round">主控音机柜</text>
<text transform="translate(477,380) scale(0.62,1)" text-anchor="middle" font-size="8" font-weight="bold" fill="#22ffff" stroke="#22ffff" stroke-width=".45" stroke-linejoin="round">网络机房</text>
<path d="M505,342.5H539L547.500,349" stroke="#22ffff" stroke-width="1.25"  shape-rendering="geometricPrecision"/>
<text transform="translate(523.5,340) scale(0.62,1)" text-anchor="middle" font-size="6.5" font-weight="bold" fill="#22ffff" stroke="#22ffff" stroke-width=".45" stroke-linejoin="round">接地端子箱</text>
<rect x="510.5" y="572.5" width="27.0" height="41.0" stroke="#e62ee6" stroke-width="1"/>
<text transform="translate(524,589) scale(0.62,1)" text-anchor="middle" font-size="7" font-weight="bold" fill="#22ffff" stroke="#22ffff" stroke-width=".45" stroke-linejoin="round">电源</text>
<text transform="translate(524,600) scale(0.62,1)" text-anchor="middle" font-size="7" font-weight="bold" fill="#22ffff" stroke="#22ffff" stroke-width=".45" stroke-linejoin="round">配电箱</text>
<rect x="607.5" y="589.5" width="29.0" height="29.0" stroke="#e62ee6" stroke-width="1"/>
<text transform="translate(622,607) scale(0.62,1)" text-anchor="middle" font-size="7" font-weight="bold" fill="#22ffff" stroke="#22ffff" stroke-width=".45" stroke-linejoin="round">电池</text>
<rect x="559.5" y="281.5" width="41.0" height="301.0" stroke="#e62ee6" stroke-width="1"/>
<text transform="translate(581.5,293) scale(0.62,1)" text-anchor="middle" font-size="7" font-weight="bold" fill="#22ffff" stroke="#22ffff" stroke-width=".45" stroke-linejoin="round">操作台设备</text>
<rect x="569.5" y="298.5" width="23.0" height="27.0" stroke="#e62ee6" stroke-width="1"/>
<path d="M573.500,298.5V325.5M576.500,302.500H586.500V321.500H576.500ZM589.500,298.5V325.5M569.5,323.500H592.5" stroke="#e62ee6" stroke-width="1" />
<path d="M589.500,299.500h3v3z" stroke="#e62ee6" stroke-width="1" fill="#e62ee6"/>
<path d="M592.5,356.5V384.5L581.5,381.5L565.5,375.5V365.5L581.5,359.5Z" stroke="#e62ee6" stroke-width="1.25"  shape-rendering="geometricPrecision"/>
<path d="M581.5,359.5C577.500,364.5 577.500,376.5 581.5,381.5M587.500,358.0C584,363.5 584,377.5 587.500,383.0" stroke="#e62ee6" stroke-width="1.25"  shape-rendering="geometricPrecision"/>
<text transform="translate(576,351.5) scale(0.6,1)" text-anchor="middle" font-size="6.5" font-weight="bold" fill="#22ffff" stroke="#22ffff" stroke-width=".45" stroke-linejoin="round">VOD 点播</text>
<path d="M592.5,415.5V443.5L581.5,440.5L565.5,434.5V424.5L581.5,418.5Z" stroke="#e62ee6" stroke-width="1.25"  shape-rendering="geometricPrecision"/>
<path d="M581.5,418.5C577.500,423.5 577.500,435.5 581.5,440.5M587.500,417.0C584,422.5 584,436.5 587.500,442.0" stroke="#e62ee6" stroke-width="1.25"  shape-rendering="geometricPrecision"/>
<text transform="translate(576,410.5) scale(0.6,1)" text-anchor="middle" font-size="6.5" font-weight="bold" fill="#22ffff" stroke="#22ffff" stroke-width=".45" stroke-linejoin="round">2# 音箱</text>
<path d="M592.5,474V502L581.5,499L565.5,493V483L581.5,477Z" stroke="#e62ee6" stroke-width="1.25"  shape-rendering="geometricPrecision"/>
<path d="M581.5,477C577.500,482 577.500,494 581.5,499M587.500,475.5C584,481 584,495 587.500,500.5" stroke="#e62ee6" stroke-width="1.25"  shape-rendering="geometricPrecision"/>
<text transform="translate(576,469) scale(0.6,1)" text-anchor="middle" font-size="6.5" font-weight="bold" fill="#22ffff" stroke="#22ffff" stroke-width=".45" stroke-linejoin="round">3# 音箱</text>
<path d="M592.5,532.5V560.5L581.5,557.5L565.5,551.5V541.5L581.5,535.5Z" stroke="#e62ee6" stroke-width="1.25"  shape-rendering="geometricPrecision"/>
<path d="M581.5,535.5C577.500,540.5 577.500,552.5 581.5,557.5M587.500,534.0C584,539.5 584,553.5 587.500,559.0" stroke="#e62ee6" stroke-width="1.25"  shape-rendering="geometricPrecision"/>
<text transform="translate(576,527.5) scale(0.6,1)" text-anchor="middle" font-size="6.5" font-weight="bold" fill="#22ffff" stroke="#22ffff" stroke-width=".45" stroke-linejoin="round">4# 音箱</text>
<path d="M624.0,352.6V350.6H645.5C650.5,350.6 653.5,357.6 653.5,370.3S650.5,390.1 645.5,390.1H624.0V388.1" stroke="#e62ee6" stroke-width="1.25"  shape-rendering="geometricPrecision"/>
<path d="M645.5,352.6H616.0Q612.5,352.6 612.5,356.6V384.1Q612.5,388.1 616.0,388.1H645.5C648.5,388.1 650.0,382.1 650.0,370.3S648.5,352.6 645.5,352.6" stroke="#e62ee6" stroke-width="1.25"  shape-rendering="geometricPrecision"/>
<path d="M624.0,411.6V409.6H645.5C650.5,409.6 653.5,416.6 653.5,429.4S650.5,449.1 645.5,449.1H624.0V447.1" stroke="#e62ee6" stroke-width="1.25"  shape-rendering="geometricPrecision"/>
<path d="M645.5,411.6H616.0Q612.5,411.6 612.5,415.6V443.1Q612.5,447.1 616.0,447.1H645.5C648.5,447.1 650.0,441.1 650.0,429.4S648.5,411.6 645.5,411.6" stroke="#e62ee6" stroke-width="1.25"  shape-rendering="geometricPrecision"/>
<path d="M624.0,470.6V468.6H645.5C650.5,468.6 653.5,475.6 653.5,488.4S650.5,508.1 645.5,508.1H624.0V506.1" stroke="#e62ee6" stroke-width="1.25"  shape-rendering="geometricPrecision"/>
<path d="M645.5,470.6H616.0Q612.5,470.6 612.5,474.6V502.1Q612.5,506.1 616.0,506.1H645.5C648.5,506.1 650.0,500.1 650.0,488.4S648.5,470.6 645.5,470.6" stroke="#e62ee6" stroke-width="1.25"  shape-rendering="geometricPrecision"/>
<path d="M624.0,528.8V526.8H645.5C650.5,526.8 653.5,533.8 653.5,546.5S650.5,566.2 645.5,566.2H624.0V564.2" stroke="#e62ee6" stroke-width="1.25"  shape-rendering="geometricPrecision"/>
<path d="M645.5,528.8H616.0Q612.5,528.8 612.5,532.8V560.2Q612.5,564.2 616.0,564.2H645.5C648.5,564.2 650.0,558.2 650.0,546.5S648.5,528.8 645.5,528.8" stroke="#e62ee6" stroke-width="1.25"  shape-rendering="geometricPrecision"/>
<path d="M823.0,226.7V224.7H802.5C797.5,224.7 794.5,231.7 794.5,244.2S797.5,263.7 802.5,263.7H823.0V261.7" stroke="#e62ee6" stroke-width="1.25"  shape-rendering="geometricPrecision"/>
<path d="M802.5,226.7H831.0Q834.5,226.7 834.5,230.7V257.7Q834.5,261.7 831.0,261.7H802.5C799.5,261.7 798.0,255.7 798.0,244.2S799.5,226.7 802.5,226.7" stroke="#e62ee6" stroke-width="1.25"  shape-rendering="geometricPrecision"/>
<path d="M823.0,268.1V266.1H802.5C797.5,266.1 794.5,273.1 794.5,285.6S797.5,305.1 802.5,305.1H823.0V303.1" stroke="#e62ee6" stroke-width="1.25"  shape-rendering="geometricPrecision"/>
<path d="M802.5,268.1H831.0Q834.5,268.1 834.5,272.1V299.1Q834.5,303.1 831.0,303.1H802.5C799.5,303.1 798.0,297.1 798.0,285.6S799.5,268.1 802.5,268.1" stroke="#e62ee6" stroke-width="1.25"  shape-rendering="geometricPrecision"/>
<path d="M823.0,309.6V307.6H802.5C797.5,307.6 794.5,314.6 794.5,327.1S797.5,346.6 802.5,346.6H823.0V344.6" stroke="#e62ee6" stroke-width="1.25"  shape-rendering="geometricPrecision"/>
<path d="M802.5,309.6H831.0Q834.5,309.6 834.5,313.6V340.6Q834.5,344.6 831.0,344.6H802.5C799.5,344.6 798.0,338.6 798.0,327.1S799.5,309.6 802.5,309.6" stroke="#e62ee6" stroke-width="1.25"  shape-rendering="geometricPrecision"/>
<path d="M823.0,351.1V349.1H802.5C797.5,349.1 794.5,356.1 794.5,368.6S797.5,388.1 802.5,388.1H823.0V386.1" stroke="#e62ee6" stroke-width="1.25"  shape-rendering="geometricPrecision"/>
<path d="M802.5,351.1H831.0Q834.5,351.1 834.5,355.1V382.1Q834.5,386.1 831.0,386.1H802.5C799.5,386.1 798.0,380.1 798.0,368.6S799.5,351.1 802.5,351.1" stroke="#e62ee6" stroke-width="1.25"  shape-rendering="geometricPrecision"/>
<path d="M823.0,392.5V390.5H802.5C797.5,390.5 794.5,397.5 794.5,410.0S797.5,429.5 802.5,429.5H823.0V427.5" stroke="#e62ee6" stroke-width="1.25"  shape-rendering="geometricPrecision"/>
<path d="M802.5,392.5H831.0Q834.5,392.5 834.5,396.5V423.5Q834.5,427.5 831.0,427.5H802.5C799.5,427.5 798.0,421.5 798.0,410.0S799.5,392.5 802.5,392.5" stroke="#e62ee6" stroke-width="1.25"  shape-rendering="geometricPrecision"/>
<path d="M823.0,433.9V431.9H802.5C797.5,431.9 794.5,438.9 794.5,451.4S797.5,470.9 802.5,470.9H823.0V468.9" stroke="#e62ee6" stroke-width="1.25"  shape-rendering="geometricPrecision"/>
<path d="M802.5,433.9H831.0Q834.5,433.9 834.5,437.9V464.9Q834.5,468.9 831.0,468.9H802.5C799.5,468.9 798.0,462.9 798.0,451.4S799.5,433.9 802.5,433.9" stroke="#e62ee6" stroke-width="1.25"  shape-rendering="geometricPrecision"/>
<path d="M823.0,475.4V473.4H802.5C797.5,473.4 794.5,480.4 794.5,492.9S797.5,512.4 802.5,512.4H823.0V510.4" stroke="#e62ee6" stroke-width="1.25"  shape-rendering="geometricPrecision"/>
<path d="M802.5,475.4H831.0Q834.5,475.4 834.5,479.4V506.4Q834.5,510.4 831.0,510.4H802.5C799.5,510.4 798.0,504.4 798.0,492.9S799.5,475.4 802.5,475.4" stroke="#e62ee6" stroke-width="1.25"  shape-rendering="geometricPrecision"/>
<path d="M823.0,516.9V514.9H802.5C797.5,514.9 794.5,521.9 794.5,534.4S797.5,553.9 802.5,553.9H823.0V551.9" stroke="#e62ee6" stroke-width="1.25"  shape-rendering="geometricPrecision"/>
<path d="M802.5,516.9H831.0Q834.5,516.9 834.5,520.9V547.9Q834.5,551.9 831.0,551.9H802.5C799.5,551.9 798.0,545.9 798.0,534.4S799.5,516.9 802.5,516.9" stroke="#e62ee6" stroke-width="1.25"  shape-rendering="geometricPrecision"/>
<path d="M848.5,220.5H917.5M848.5,557.6H917.5" stroke="#e62ee6" stroke-width="1" />
<rect x="848.5" y="222.5" width="69.0" height="332.1" stroke="#e62ee6" stroke-width="1"/>
<path d="M879.5,220.5V557.6M893.5,220.5V557.6" stroke="#e62ee6" stroke-width="1" />
<rect x="882.5" y="231.5" width="8.0" height="24.0" stroke="#e62ee6" stroke-width="1"/>
<text transform="translate(864.5,245.5) scale(0.62,1)" text-anchor="middle" font-size="7" font-weight="bold" fill="#22ffff" stroke="#22ffff" stroke-width=".45" stroke-linejoin="round">门禁考勤</text>
<path d="M848.5,264.4L917.5,264.4" stroke="#e62ee6" stroke-width="1"/>
<rect x="882.5" y="272.9" width="8.0" height="24.0" stroke="#e62ee6" stroke-width="1"/>
<text transform="translate(864.5,286.9) scale(0.62,1)" text-anchor="middle" font-size="7" font-weight="bold" fill="#22ffff" stroke="#22ffff" stroke-width=".45" stroke-linejoin="round">防盗报警</text>
<path d="M848.5,305.9L917.5,305.9" stroke="#e62ee6" stroke-width="1"/>
<rect x="882.5" y="314.4" width="8.0" height="24.0" stroke="#e62ee6" stroke-width="1"/>
<text transform="translate(864.5,328.4) scale(0.62,1)" text-anchor="middle" font-size="7" font-weight="bold" fill="#22ffff" stroke="#22ffff" stroke-width=".45" stroke-linejoin="round">闭路监控</text>
<path d="M848.5,347.4L917.5,347.4" stroke="#e62ee6" stroke-width="1"/>
<rect x="882.5" y="355.9" width="8.0" height="24.0" stroke="#e62ee6" stroke-width="1"/>
<text transform="translate(864.5,369.9) scale(0.62,1)" text-anchor="middle" font-size="7" font-weight="bold" fill="#22ffff" stroke="#22ffff" stroke-width=".45" stroke-linejoin="round">无线巡更管理</text>
<path d="M848.5,388.8L917.5,388.8" stroke="#e62ee6" stroke-width="1"/>
<rect x="882.5" y="397.3" width="8.0" height="24.0" stroke="#e62ee6" stroke-width="1"/>
<text transform="translate(864.5,411.3) scale(0.62,1)" text-anchor="middle" font-size="7" font-weight="bold" fill="#22ffff" stroke="#22ffff" stroke-width=".45" stroke-linejoin="round">高清工作站</text>
<path d="M848.5,430.2L917.5,430.2" stroke="#e62ee6" stroke-width="1"/>
<rect x="882.5" y="438.8" width="8.0" height="24.0" stroke="#e62ee6" stroke-width="1"/>
<text transform="translate(864.5,452.8) scale(0.62,1)" text-anchor="middle" font-size="7" font-weight="bold" fill="#22ffff" stroke="#22ffff" stroke-width=".45" stroke-linejoin="round">电视墙</text>
<path d="M848.5,471.7L917.5,471.7" stroke="#e62ee6" stroke-width="1"/>
<rect x="882.5" y="480.2" width="8.0" height="24.0" stroke="#e62ee6" stroke-width="1"/>
<text transform="translate(864.5,494.2) scale(0.62,1)" text-anchor="middle" font-size="7" font-weight="bold" fill="#22ffff" stroke="#22ffff" stroke-width=".45" stroke-linejoin="round">大屏显示器</text>
<path d="M848.5,513.2L917.5,513.2" stroke="#e62ee6" stroke-width="1"/>
<rect x="882.5" y="522.2" width="2.0" height="24.0" stroke="#e62ee6" stroke-width="1"/>
<rect x="886.5" y="525.2" width="4.0" height="18.0" stroke="#e62ee6" stroke-width="1"/>
<text transform="translate(864.5,535.7) scale(0.62,1)" text-anchor="middle" font-size="7" font-weight="bold" fill="#22ffff" stroke="#22ffff" stroke-width=".45" stroke-linejoin="round">打印机</text>
<text transform="translate(948.5,364) scale(0.62,1)" text-anchor="middle" font-size="8" font-weight="bold" fill="#22ffff" stroke="#22ffff" stroke-width=".45" stroke-linejoin="round">控制中心</text>
<path d="M1020.5,619.500V146.5H1065.5V619.500" stroke="#c840c8" stroke-width="1" />
<path d="M1020.5,619.500H1065.5" stroke="#c840c8" stroke-width="1" />
<text transform="translate(1045.5,262.5) scale(0.7,1)" text-anchor="middle" font-size="7" font-weight="bold" fill="#22ffff" stroke="#22ffff" stroke-width=".45" stroke-linejoin="round">电</text>
<text transform="translate(1045.5,359) scale(0.7,1)" text-anchor="middle" font-size="7" font-weight="bold" fill="#22ffff" stroke="#22ffff" stroke-width=".45" stroke-linejoin="round">设</text>
<text transform="translate(1045.5,455.5) scale(0.7,1)" text-anchor="middle" font-size="7" font-weight="bold" fill="#22ffff" stroke="#22ffff" stroke-width=".45" stroke-linejoin="round">间</text>
<text transform="translate(1099.5,379.5) scale(0.6,1)" text-anchor="middle" font-size="7" font-weight="bold" fill="#22ffff" stroke="#22ffff" stroke-width=".45" stroke-linejoin="round">消防通道</text>
<text transform="translate(1096,406) scale(0.5,1)" text-anchor="middle" font-size="7" font-weight="bold" fill="#22ffff" stroke="#22ffff" stroke-width=".45" stroke-linejoin="round">此处管线桥架由消防门进入</text>
<path d="M1071,396.5H1086" stroke="#e02020" stroke-width="1" />
<path d="M1082,395.500L1086,396.500L1082,397.500" stroke="#e02020" stroke-width="1.25"  shape-rendering="geometricPrecision"/>
<path d="M1310.5,101V672M1327.5,101V672" stroke="#c840c8" stroke-width="1" />
<path d="M1344.5,101V672" stroke="#c840c8" stroke-width="1.2" stroke-dasharray="13 3.500"/>
<path d="M450.5,663L450.5,672" stroke="#e62ee6" stroke-width="1"/></svg>
<div id="btabs" class="abs">
<svg class="abs" style="left:428px;top:0" width="150" height="20" viewBox="0 0 150 20"><path d="M12.500,0H74.500L69,17Q68.200,19.500 65.500,19.500H23.500Q20.800,19.500 19.800,17Z" fill="#000"/><path d="M74,.5H134L128.500,16.800Q127.600,19 125,19H83Q80.400,19 79.500,16.800Z" fill="#fff" stroke="#000" stroke-width="1"/><text x="43.800" y="15.800" text-anchor="middle" font-size="12" font-weight="500" fill="#fff" font-family="'Liberation Sans','Noto Sans CJK SC',sans-serif">模型</text><text x="105" y="15.800" text-anchor="middle" font-size="12" font-weight="500" fill="#111" font-family="'Liberation Sans','Noto Sans CJK SC',sans-serif">布局1</text></svg>
</div>
<div id="ftb" class="abs">
<svg class="abs" style="left:7px;top:7px" width="20" height="20" viewBox="0 0 20 20"><g fill="none" stroke="#eee" stroke-width="1.400"><rect x="1.500" y="1.500" width="7" height="7" rx="1.800"/><rect x="1.500" y="11" width="7" height="7" rx="1.800"/><rect x="11" y="11" width="7" height="7" rx="1.800"/><rect x="11" y="1.200" width="6.600" height="6.600" rx="1.600" transform="rotate(45 14.300 4.500)"/></g></svg>
<i class="abs vd" style="left:41px"></i>
<span class="abs" style="left:49px;top:8px;font-size:13px;line-height:18px;color:#ececec">标注分类</span>
<div class="abs" id="dd"><i class="abs" style="left:15px;top:5px;width:14px;height:13px;background:#e8530e;border:1px solid #2a2a2a"></i><span class="abs" style="left:33px;top:2px;font-size:13px;line-height:18px;color:#fff">未分类</span><i class="abs" style="left:135px;top:9px;border:5px solid transparent;border-top:7px solid #fff;border-bottom:0"></i></div>
<i class="abs vd" style="left:267px"></i>
<svg class="abs" style="left:278px;top:5px" width="136" height="24" viewBox="0 0 136 24"><g fill="none" stroke="#eee" stroke-width="1.500" stroke-linejoin="round" stroke-linecap="round">
<path d="M13,4.500H6q-2,0-2,2V18.500q0,2 2,2H18q2,0 2-2V12"/><path d="M9,11.500L18.500,2L21.500,5L12,14.500L8.500,15Z"/>
<path d="M49.500,2.500V21.500M40,12H59M46.500,5.500L49.500,2.500L52.500,5.500M46.500,18.500L49.500,21.500L52.500,18.500M43,9L40,12L43,15M56,9L59,12L56,15" stroke-width="1.300"/>
<rect x="78" y="8" width="12" height="12.500" rx="3"/><path d="M82.500,5H91.500q3,0 3,3V17"/>
<rect x="115" y="6" width="11" height="12.500" rx="1.500"/><path d="M118,6V4q0-1 1-1h3q1,0 1,1V6" /><rect x="121.500" y="11" width="11" height="10.500" rx="1.500" fill="#626262"/></g></svg>
</div>

<div id="status" class="abs"><span class="abs" style="left:6px;top:10px">x = 299277 y = -128770</span><span class="abs" style="left:262px;top:11px">模型中的标注比例：1</span>
<svg class="abs" style="left:1308px;top:10px" width="18" height="18" viewBox="0 0 18 18"><rect x="1.700" y="1.700" width="13.600" height="13.600" rx="1.500" fill="#e8f3fb" stroke="#3a9ad6" stroke-width="1.200"/><path stroke="#2e92d6" stroke-width="1.800" d="M4.600,12.200h8.200"/></svg></div>

<div id="edgeL" class="abs"></div>
<div id="edgeR" class="abs"></div>
</body>
</html>
